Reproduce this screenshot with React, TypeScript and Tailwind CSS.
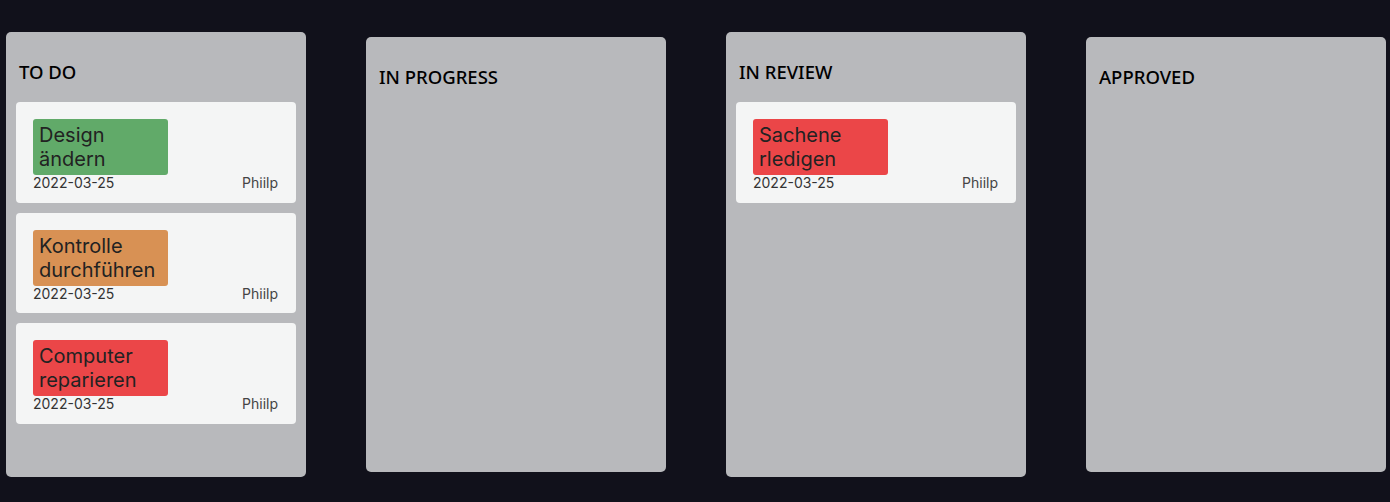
const columns = [
  {
    title: 'TO DO',
    tall: true,
    tasks: [
      { title: 'Design ändern', color: 'bg-[#61aa69]', date: '2022-03-25', user: 'Phiilp' },
      { title: 'Kontrolle durchführen', color: 'bg-[#d89154]', date: '2022-03-25', user: 'Phiilp' },
      { title: 'Computer reparieren', color: 'bg-[#eb4648]', date: '2022-03-25', user: 'Phiilp' },
    ],
  },
  { title: 'IN PROGRESS', tall: false, tasks: [] },
  {
    title: 'IN REVIEW',
    tall: true,
    tasks: [{ title: 'Sachene rledigen', color: 'bg-[#eb4648]', date: '2022-03-25', user: 'Phiilp' }],
  },
  { title: 'APPROVED', tall: false, tasks: [] },
]

type Task = { title: string; color: string; date: string; user: string }

function TaskCard({ task }: { task: Task }) {
  return (
    <div className="h-[100.5px] rounded-[4px] bg-[#f4f5f5] pl-[17px] pr-[18px] pt-[17px]">
      <div className={`w-[135px] rounded-[3px] px-[6px] py-[4px] text-[20px] leading-[24px] text-[#222] ${task.color}`}>
        {task.title}
      </div>
      <div className="flex justify-between text-[14px] leading-[16px]">
        <span className="text-[#333]">{task.date}</span>
        <span className="text-[#444]">{task.user}</span>
      </div>
    </div>
  )
}

export default function App() {
  return (
    <div className="flex h-[502px] items-start gap-[60px] bg-[#11111b] pl-[6px] pt-[32px] font-['Inter',sans-serif]">
      {columns.map((col) => (
        <div
          key={col.title}
          className={`w-[300px] shrink-0 rounded-[5px] bg-[#b8b9bc] px-[10px] ${col.tall ? 'h-[445px]' : 'mt-[5px] h-[435px]'}`}
        >
          <div className="flex h-[70px] items-center pl-[3px] pt-[10px] font-['Noto_Sans',sans-serif] text-[18.5px] font-medium text-black">
            {col.title}
          </div>
          <div className="flex flex-col gap-[10px]">
            {col.tasks.map((t) => (
              <TaskCard key={t.title} task={t} />
            ))}
          </div>
        </div>
      ))}
    </div>
  )
}
